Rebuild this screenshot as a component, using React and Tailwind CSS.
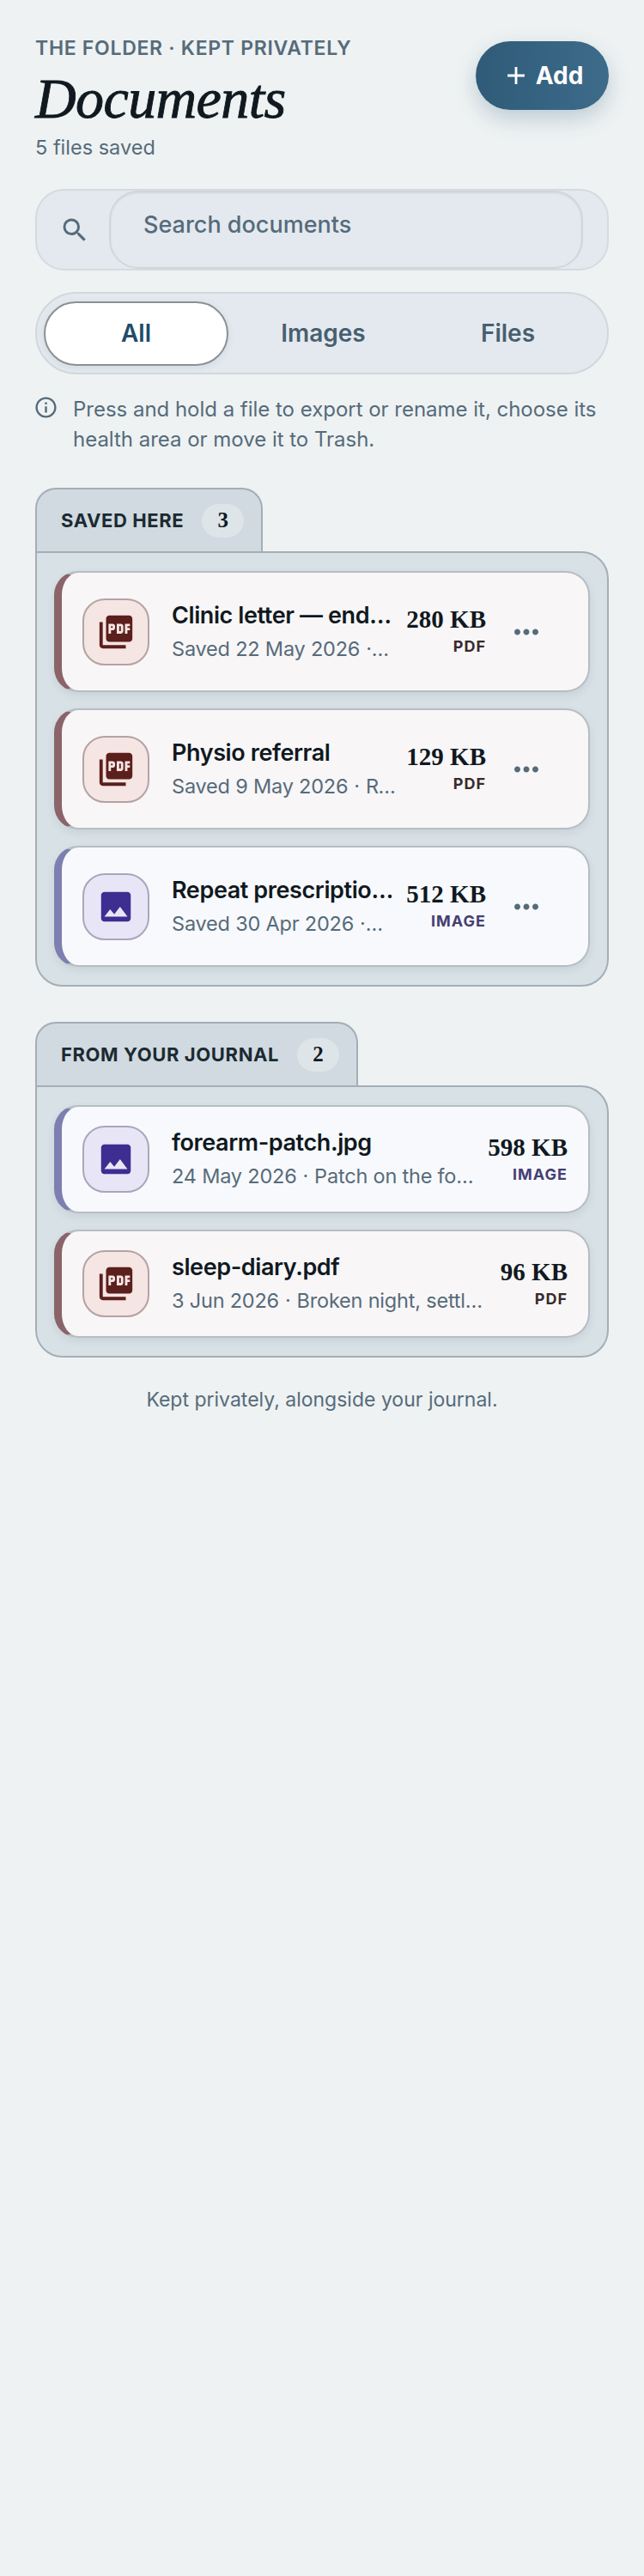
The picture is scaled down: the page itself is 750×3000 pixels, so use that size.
import React from 'react';
import { MdAdd, MdImage, MdInfoOutline, MdMoreHoriz, MdPictureAsPdf, MdSearch } from 'react-icons/md';

const sans = 'font-["Inter",sans-serif]';
const serif = 'font-["Liberation_Serif",serif]';

const saved = [
  { id: 1, type: 'pdf', title: 'Clinic letter — endocrinology', date: 'Saved 22 May 2026', note: 'Metabolic clinic', size: '280 KB' },
  { id: 2, type: 'pdf', title: 'Physio referral', date: 'Saved 9 May 2026', note: 'Rehab', size: '129 KB' },
  { id: 3, type: 'image', title: 'Repeat prescription photo', date: 'Saved 30 Apr 2026', note: 'Medication', size: '512 KB' },
];

const journal = [
  { id: 4, type: 'image', title: 'forearm-patch.jpg', date: '24 May 2026', note: 'Patch on the forearm again', size: '598 KB' },
  { id: 5, type: 'pdf', title: 'sleep-diary.pdf', date: '3 Jun 2026', note: 'Broken night, settled by morning', size: '96 KB' },
];

const FileCard = ({ file, menu }) => {
  const isPdf = file.type === 'pdf';
  return (
    <div
      className={`flex items-center rounded-[28px] border-2 border-l-[9px] border-[#b7bdc2] pl-[24px] shadow-[0_4px_10px_rgba(60,80,95,0.1)] ${
        menu ? 'h-[141px] pr-[51px]' : 'h-[126px] pr-[24px]'
      } ${isPdf ? 'border-l-[#8a6468] bg-[#f8f6f7]' : 'border-l-[#7d7fb0] bg-[#f8f9fc]'}`}
    >
      <div
        className={`flex h-[78px] w-[78px] shrink-0 items-center justify-center rounded-[26px] border-2 ${
          isPdf ? 'border-[#b3a3a5] bg-[#f5e5e3] text-[#5b1f1c]' : 'border-[#aaa6bb] bg-[#e8e6f6] text-[#3e2e91]'
        }`}
      >
        {isPdf ? <MdPictureAsPdf size={46} /> : <MdImage size={46} />}
      </div>
      <div className="ml-[26px] min-w-0 flex-1">
        <div className="truncate text-[27px] leading-[36px] font-semibold tracking-[-0.4px] text-[#10191f]">{file.title}</div>
        <div className="mt-[4px] truncate text-[23.5px] leading-[34px] tracking-[-0.2px] text-[#566b7a]">
          {file.date}
          <span className="mx-[7px]">·</span>
          {file.note}
        </div>
      </div>
      <div className="mb-[4px] ml-[10px] flex shrink-0 flex-col items-end">
        <div className={`${serif} text-[29px] leading-[36px] font-bold text-[#10191f]`}>{file.size}</div>
        <div className={`mt-[3px] text-[18px] leading-[22px] font-bold tracking-[1px] ${isPdf ? 'text-[#3a2a2c]' : 'text-[#453f72]'}`}>
          {isPdf ? 'PDF' : 'IMAGE'}
        </div>
      </div>
      {menu && <MdMoreHoriz size={42} className="ml-[26px] shrink-0 text-[#566b7a]" />}
    </div>
  );
};

const Folder = ({ label, count, files, menu, className }) => (
  <section className={className}>
    <div className="inline-flex h-[74px] items-center rounded-t-[24px] border-2 border-b-0 border-[#a5aeb5] bg-[#d0dae0] pr-[20px] pl-[28px] align-bottom">
      <span className="text-[22px] font-bold tracking-[0.6px] text-[#1c2a32]">{label}</span>
      <span className={`${serif} ml-[21px] flex h-[39px] w-[49px] items-center justify-center rounded-full bg-[#dde5e9] text-[25px] font-bold text-[#10191f]`}>
        {count}
      </span>
    </div>
    <div className="flex flex-col gap-[19px] rounded-[32px] rounded-tl-none border-2 border-[#a5aeb5] bg-[#d8e1e6] px-[20px] pt-[21px] pb-[21px]">
      {files.map((file) => (
        <FileCard key={file.id} file={file} menu={menu} />
      ))}
    </div>
  </section>
);

export default function App() {
  return (
    <div className={`${sans} min-h-[3000px] w-[750px] bg-[#eef2f3] px-[41px] pt-[42px]`}>
      <header className="flex items-start justify-between">
        <div>
          <div className="text-[23px] leading-[28px] font-semibold tracking-[0.7px] text-[#566b7a]">THE FOLDER · KEPT PRIVATELY</div>
          <h1 className={`${serif} mt-[15px] text-[66px] leading-[60px] font-normal tracking-[-0.6px] text-[#10191f] italic [-webkit-text-stroke:0.9px_#10191f]`}>Documents</h1>
          <div className="mt-[11px] text-[23.5px] leading-[32px] text-[#566b7a]">5 files saved</div>
        </div>
        <button className="mt-[6px] flex h-[80px] w-[155px] items-center justify-center gap-[6px] rounded-full bg-gradient-to-r from-[#2f5b78] to-[#3d6b8a] text-[28px] font-bold text-white shadow-[0_10px_24px_rgba(47,91,120,0.25)]">
          <MdAdd size={34} />
          Add
        </button>
      </header>

      <div className="mt-[32px] flex h-[95px] items-center rounded-[34px] border-2 border-[#d5dade] bg-[#e3e9ef] pr-[28px] pl-[26px]">
        <MdSearch size={36} className="shrink-0 text-[#566b7a]" />
        <div className="ml-[22px] flex h-[91px] flex-1 items-center rounded-[34px] border-2 border-[#d2d6da] bg-[#e3e9ef] pb-[10px] pl-[38px] text-[27px] font-medium text-[#566b7a] shadow-[inset_0_1px_2px_rgba(60,80,95,0.12)]">
          Search documents
        </div>
      </div>

      <div className="mt-[25px] flex h-[96px] items-center rounded-full border-2 border-[#d2d7db] bg-[#e3e9ef] px-[8px]">
        <div className="flex h-[75px] w-[215px] items-center justify-center rounded-full border-2 border-[#8a9096] bg-white text-[28px] font-semibold text-[#214c69] shadow-[0_2px_8px_rgba(60,80,95,0.1)]">
          All
        </div>
        <div className="flex flex-1 justify-center pl-[3px] text-[28px] font-semibold text-[#475f6f]">Images</div>
        <div className="flex w-[215px] justify-center text-[28px] font-semibold text-[#475f6f]">Files</div>
      </div>

      <div className="mt-[24px] flex items-start">
        <MdInfoOutline size={29} className="-ml-[2px] shrink-0 text-[#566b7a]" />
        <p className="ml-[17px] text-[24px] leading-[34.5px] tracking-[-0.02px] text-[#566b7a]">
          Press and hold a file to export or rename it, choose its health area or move it to Trash.
        </p>
      </div>

      <Folder className="mt-[39px]" label="SAVED HERE" count="3" files={saved} menu />
      <Folder className="mt-[41px]" label="FROM YOUR JOURNAL" count="2" files={journal} />

      <p className="mt-[33px] text-center text-[23px] leading-[32px] text-[#566b7a]">Kept privately, alongside your journal.</p>
    </div>
  );
}
